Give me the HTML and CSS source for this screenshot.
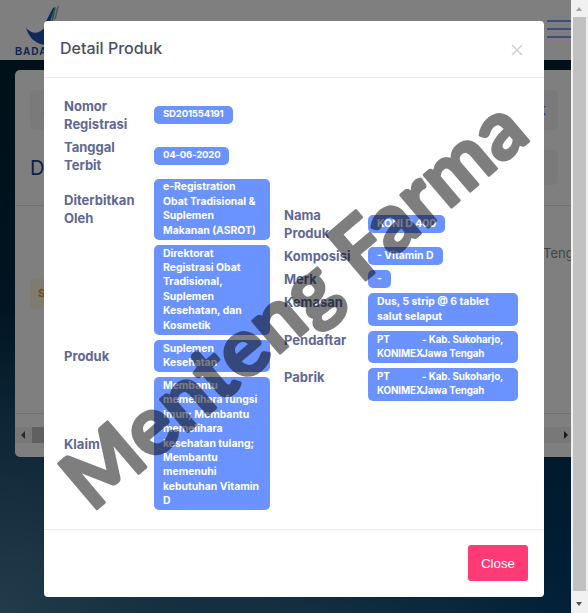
FILE: index.html
```html
<!DOCTYPE html>
<html lang="id">
<head>
<meta charset="utf-8">
<title>Detail Produk</title>
<link rel="stylesheet" href="styles.css">
</head>
<body>
<div class="window">
  <div class="viewport">
    <header class="topbar">
      <div class="brand">
        <svg class="emblem" viewBox="0 0 36 42" width="36" height="42" aria-hidden="true">
          <path class="emblem-blue" d="M1 23C9 31 17 29 24 16L19 40C9 38 4 32 1 23Z"/>
          <path class="emblem-blue" d="M20 18L28 3 30 2 25 17Z"/>
          <path class="emblem-green" d="M29 4L31 2 28 16 26 17Z"/>
          <path class="emblem-pale" d="M32 2L34 0 31 14 29 15Z"/>
        </svg>
        <span class="brand-name">BADAN POM</span>
      </div>
      <div class="burger"><i></i><i></i><i></i></div>
    </header>
    <section class="card">
      <div class="search-box"><span class="search-text">Search</span><span class="search-key">K</span></div>
      <div class="title-row">
        <h2 class="page-title">Detail</h2>
        <div class="title-box"></div>
      </div>
      <div class="card-body">
        <p class="location">Tengah</p>
        <div class="notice">Sukses</div>
      </div>
      <div class="hscroll">
        <span class="arrow-left"></span>
        <span class="hthumb"></span>
        <span class="arrow-right"></span>
      </div>
    </section>
    <div class="backdrop"></div>
    <div class="modal">
      <div class="modal-head">
        <h1 class="modal-title">Detail Produk</h1>
        <svg class="close-x" viewBox="0 0 12 12" width="12" height="12" aria-hidden="true"><path d="M1 1L11 11M11 1L1 11"/></svg>
      </div>
      <div class="modal-body">
        <div class="col col-left">
          <div class="label">Nomor Registrasi</div><div><span class="pill pill-num">SD201554191</span></div>
          <div class="label">Tanggal Terbit</div><div><span class="pill pill-num">04-06-2020</span></div>
          <div class="label">Diterbitkan Oleh</div><div><span class="pill">e-Registration Obat Tradisional &amp; Suplemen Makanan (ASROT)</span></div>
          <div class="label"></div><div><span class="pill">Direktorat Registrasi Obat Tradisional, Suplemen Kesehatan, dan Kosmetik</span></div>
          <div class="label">Produk</div><div><span class="pill">Suplemen Kesehatan</span></div>
          <div class="label">Klaim</div><div><span class="pill">Membantu memelihara fungsi Imun; Membantu memelihara kesehatan tulang; Membantu memenuhi kebutuhan Vitamin D</span></div>
        </div>
        <div class="col col-right">
          <div class="label">Nama Produk</div><div><span class="pill">KONI D 400</span></div>
          <div class="label top">Komposisi</div><div><span class="pill">- Vitamin D</span></div>
          <div class="label top">Merk</div><div><span class="pill">-</span></div>
          <div class="label top">Kemasan</div><div><span class="pill">Dus, 5 strip @ 6 tablet salut selaput</span></div>
          <div class="label top">Pendaftar</div><div><span class="pill pill-split"><span class="co">PT KONIMEX</span><span>- Kab. Sukoharjo, Jawa Tengah</span></span></div>
          <div class="label top">Pabrik</div><div><span class="pill pill-split"><span class="co">PT KONIMEX</span><span>- Kab. Sukoharjo, Jawa Tengah</span></span></div>
        </div>
      </div>
      <div class="modal-foot"><button class="close-btn" type="button">Close</button></div>
    </div>
    <svg class="watermark" width="571" height="613">
      <text class="watermark-text" x="92" y="513" textLength="578" transform="rotate(-40.4 92 513)">Menteng Farma</text>
    </svg>
  </div>
  <div class="vscroll">
    <span class="v-up"></span>
    <span class="v-thumb"></span>
    <span class="v-down"></span>
  </div>
</div>
</body>
</html>
```
FILE: styles.css
```css
* { box-sizing: border-box; }
html, body { margin: 0; height: 100%; overflow: hidden; }
body { font-family: Inter, "Liberation Sans", sans-serif; }

.window { display: flex; width: 588px; height: 613px; }

.viewport {
  position: relative;
  flex: 1;
  overflow: hidden;
  background:
    radial-gradient(ellipse 300px 130px at 290px 640px, #2f6484 0%, rgba(47,100,132,0) 100%),
    radial-gradient(ellipse 340px 330px at 0 640px, #4a7c98 0%, rgba(74,124,152,0) 100%),
    linear-gradient(180deg, #00202f 0%, #02273f 45%, #034070 100%);
}

.topbar {
  display: flex;
  justify-content: space-between;
  height: 60px;
  background: #fff;
}
.brand { position: relative; width: 120px; padding: 46px 0 0 15px; }
.emblem { position: absolute; left: 25px; top: 5px; }
.emblem-blue { fill: #1f55b5; }
.emblem-green { fill: #3cb878; }
.emblem-pale { fill: #9fb0c8; }
.brand-name {
  display: block;
  font: 700 10px/12px "Liberation Sans", sans-serif;
  letter-spacing: 0.9px;
  color: #1c4a9a;
  white-space: nowrap;
}
.burger { display: flex; flex-direction: column; gap: 6px; width: 24px; padding-top: 20px; }
.burger i { display: block; height: 2px; background: #7b9bff; }

.card {
  margin: 10px 0 0 15px;
  height: 387px;
  background: #fff;
  border-radius: 5px 0 0 5px;
  display: flex;
  flex-direction: column;
  padding-top: 20px;
}
.search-box {
  display: flex;
  justify-content: space-between;
  align-items: center;
  height: 40px;
  margin: 0 13px 0 15px;
  padding: 0 12px 0 13px;
  background: #f4f4f6;
  border-radius: 5px;
  font-size: 12px;
}
.search-text { color: #b08a50; }
.search-key { color: #5a78e0; font-weight: 600; }
.title-row {
  display: flex;
  justify-content: space-between;
  align-items: center;
  height: 35px;
  margin: 20px 13px 0 15px;
}
.page-title { margin: 0; font-size: 20px; font-weight: 400; color: #17408f; }
.title-box { width: 40px; height: 35px; background: #f4f4f6; border-radius: 5px; }
.card-body {
  flex: 1;
  margin-top: 20px;
  border-top: 1px solid #e2e2e2;
  border-bottom: 1px solid #e2e2e2;
  padding: 39px 0 0 15px;
  overflow: hidden;
}
.location { margin: 0 0 0 513px; font-size: 13px; line-height: 16px; color: #888; white-space: nowrap; }
.notice {
  width: 120px;
  height: 30px;
  margin-top: 18px;
  padding: 7px 8px;
  border-radius: 4px;
  background: #fff6e0;
  color: #e0a030;
  font-size: 11px;
  font-weight: 700;
}
.hscroll {
  position: relative;
  display: flex;
  align-items: center;
  height: 16px;
  margin: 13px 0 14px;
  background: #f1f1f1;
}
.arrow-left { width: 0; height: 0; margin-left: 6px; border: 4px solid transparent; border-left-width: 0; border-right: 4px solid #555; }
.hthumb { width: 120px; height: 16px; margin-left: 7px; background: #c1c1c1; }
.arrow-right { width: 0; height: 0; margin-left: auto; margin-right: 3px; border: 4px solid transparent; border-right-width: 0; border-left: 4px solid #333; }

.backdrop { position: absolute; inset: 0; background: rgba(0, 0, 0, 0.5); }

.modal {
  position: absolute;
  left: 44px;
  top: 21px;
  width: 500px;
  height: 576px;
  display: flex;
  flex-direction: column;
  background: #fff;
  border-radius: 4px;
}
.modal-head {
  display: flex;
  justify-content: space-between;
  align-items: center;
  height: 57px;
  padding: 0 21px 0 16px;
  border-bottom: 1px solid #e9ecef;
}
.modal-title { margin: 0 0 2px; font-size: 16px; line-height: 24px; font-weight: 500; color: #4a4e66; }
.close-x { margin-top: 2px; }
.close-x path { stroke: #cdd0dc; stroke-width: 1.5; fill: none; }

.modal-body {
  flex: 1;
  display: flex;
  align-items: center;
  gap: 14px;
  padding: 0 20px;
}
.col { display: grid; row-gap: 5px; align-items: center; }
.col-left { grid-template-columns: 90px 116px; }
.col-right { grid-template-columns: 84px 150px; }
.label {
  font-size: 13px;
  line-height: 18px;
  font-weight: 700;
  color: #5f6896;
}
.label.top { align-self: start; }
.pill {
  display: block;
  width: fit-content;
  padding: 1.8px 9px;
  border-radius: 5px;
  background: #6a93ff;
  color: #fff;
  font-size: 10.4px;
  line-height: 14.4px;
  font-weight: 700;
}
.pill-num { font-size: 9.6px; letter-spacing: -0.2px; }
.pill-split { display: flex; width: 100%; font-size: 9.8px; letter-spacing: -0.1px; }
.co { width: 45px; flex: none; }

.modal-foot {
  display: flex;
  justify-content: flex-end;
  align-items: flex-start;
  height: 68px;
  padding: 15px 16px 0;
  border-top: 1px solid #e9ecef;
}
.close-btn {
  width: 60px;
  height: 36px;
  border: 0;
  border-radius: 3px;
  background: #ff3a76;
  color: #fff;
  font: 13.333px "Liberation Sans", sans-serif;
}

.watermark { position: absolute; left: 0; top: 0; opacity: 0.5; pointer-events: none; }
.watermark-text {
  font-family: Lato, sans-serif;
  font-size: 82px;
  font-weight: 700;
  fill: #000;
  stroke: #000;
  stroke-width: 3px;
  stroke-linejoin: round;
}

.vscroll {
  width: 17px;
  display: flex;
  flex-direction: column;
  align-items: center;
  background: #f1f1f1;
}
.v-up { height: 17px; width: 100%; position: relative; }
.v-up::after { content: ""; position: absolute; left: 5px; top: 7px; border: 3.5px solid transparent; border-top-width: 0; border-bottom: 4px solid #a3a3a3; }
.v-thumb { flex: 1; width: 13px; background: #c1c1c1; }
.v-down { height: 22px; width: 100%; position: relative; }
.v-down::after { content: ""; position: absolute; left: 5px; top: 11px; border: 3.5px solid transparent; border-bottom-width: 0; border-top: 4px solid #505050; }
```
